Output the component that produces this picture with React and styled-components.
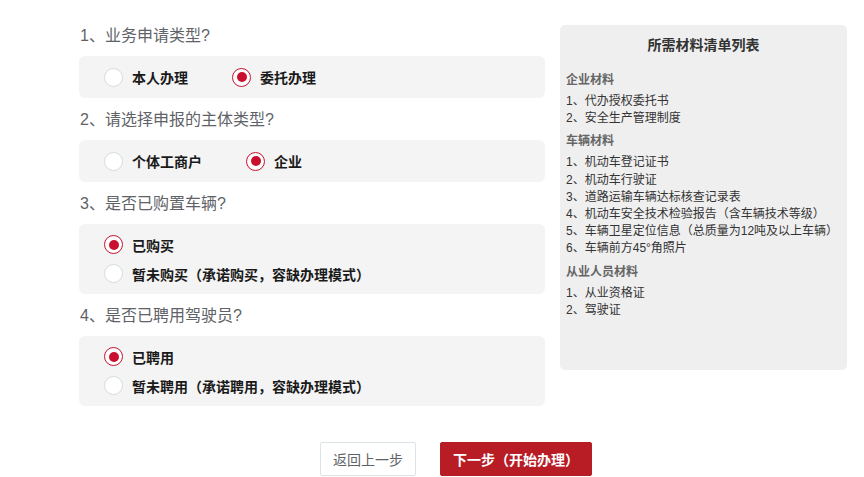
import React from 'react'
import styled, { createGlobalStyle } from 'styled-components'

const GlobalStyle = createGlobalStyle`
  html, body { margin: 0; padding: 0; background: #fff; }
  body {
    font-family: "Liberation Sans", "Noto Sans CJK SC", sans-serif;
    color: #333;
  }
`

const Page = styled.div`
  display: flex;
  flex-direction: column;
  padding: 25px 17px 0 79px;
`

const Columns = styled.div`
  display: flex;
  gap: 15px;
  align-items: flex-start;
`

const FormCol = styled.div`
  width: 466px;
  display: flex;
  flex-direction: column;
`

const Question = styled.div`
  font-size: 16px;
  line-height: 22px;
  color: #5f6368;
  margin: ${p => (p.first ? '0' : '11px')} 0 9px;
  padding-left: 1px;
`

const OptionsBox = styled.div`
  background: #f4f4f4;
  border-radius: 6px;
  padding: 6px 25px;
  display: flex;
  flex-direction: ${p => (p.stacked ? 'column' : 'row')};
  gap: ${p => (p.stacked ? '0' : '44px')};
`

const Option = styled.label`
  display: flex;
  align-items: center;
  height: ${p => (p.stacked ? '29px' : '30px')};
  gap: 9px;
  font-size: 14px;
  font-weight: bold;
  color: #1a1a1a;
  cursor: pointer;
`

const Circle = styled.span`
  box-sizing: border-box;
  width: 19px;
  height: 19px;
  border-radius: 50%;
  background: #fff;
  border: ${p => (p.checked ? '1.5px solid #c8102e' : '1px solid #d4dce1')};
  display: flex;
  align-items: center;
  justify-content: center;
  &::after {
    content: '';
    display: ${p => (p.checked ? 'block' : 'none')};
    width: 10px;
    height: 10px;
    border-radius: 50%;
    background: #c8102e;
  }
`

const Aside = styled.div`
  width: 287px;
  height: 345px;
  box-sizing: border-box;
  background: #efefef;
  border-radius: 5px;
  padding: 10px 6px;
`

const AsideTitle = styled.div`
  text-align: center;
  font-size: 14px;
  font-weight: bold;
  line-height: 20px;
  color: #333;
  margin-bottom: 17px;
`

const Section = styled.div`
  & + & { margin-top: 6px; }
`

const SectionHead = styled.div`
  font-size: 12px;
  font-weight: bold;
  line-height: 17px;
  color: #666;
  margin-bottom: 4px;
`

const Item = styled.div`
  font-size: 12px;
  line-height: 17.2px;
  color: #333;
`

const Buttons = styled.div`
  display: flex;
  gap: 24px;
  padding-left: 241px;
  margin-top: 36px;
`

const Button = styled.button`
  box-sizing: border-box;
  height: 34px;
  padding: 0 12px;
  font-family: inherit;
  font-size: 14px;
  font-weight: ${p => (p.primary ? 'bold' : 'normal')};
  color: ${p => (p.primary ? '#fff' : '#5f6368')};
  background: ${p => (p.primary ? '#b81c25' : '#fff')};
  border: 1px solid ${p => (p.primary ? '#b81c25' : '#dce3e6')};
  border-radius: 2px;
  cursor: pointer;
`

const questions = [
  { title: '1、业务申请类型?', options: ['本人办理', '委托办理'], checked: 1 },
  { title: '2、请选择申报的主体类型?', options: ['个体工商户', '企业'], checked: 1 },
  {
    title: '3、是否已购置车辆?',
    options: ['已购买', '暂未购买（承诺购买，容缺办理模式）'],
    checked: 0,
    stacked: true,
  },
  {
    title: '4、是否已聘用驾驶员?',
    options: ['已聘用', '暂未聘用（承诺聘用，容缺办理模式）'],
    checked: 0,
    stacked: true,
  },
]

const materials = [
  { head: '企业材料', items: ['代办授权委托书', '安全生产管理制度'] },
  {
    head: '车辆材料',
    items: [
      '机动车登记证书',
      '机动车行驶证',
      '道路运输车辆达标核查记录表',
      '机动车安全技术检验报告（含车辆技术等级）',
      '车辆卫星定位信息（总质量为12吨及以上车辆）',
      '车辆前方45°角照片',
    ],
  },
  { head: '从业人员材料', items: ['从业资格证', '驾驶证'] },
]

const App = () => {
  return (
    <>
      <GlobalStyle />
      <Page>
        <Columns>
          <FormCol>
            {questions.map((q, qi) => (
              <React.Fragment key={q.title}>
                <Question first={qi === 0}>{q.title}</Question>
                <OptionsBox stacked={q.stacked}>
                  {q.options.map((o, oi) => (
                    <Option key={o} stacked={q.stacked}>
                      <Circle checked={oi === q.checked} />
                      {o}
                    </Option>
                  ))}
                </OptionsBox>
              </React.Fragment>
            ))}
          </FormCol>
          <Aside>
            <AsideTitle>所需材料清单列表</AsideTitle>
            {materials.map(s => (
              <Section key={s.head}>
                <SectionHead>{s.head}</SectionHead>
                {s.items.map((it, i) => (
                  <Item key={it}>{i + 1}、{it}</Item>
                ))}
              </Section>
            ))}
          </Aside>
        </Columns>
        <Buttons>
          <Button>返回上一步</Button>
          <Button primary>下一步（开始办理）</Button>
        </Buttons>
      </Page>
    </>
  )
}

export default App
